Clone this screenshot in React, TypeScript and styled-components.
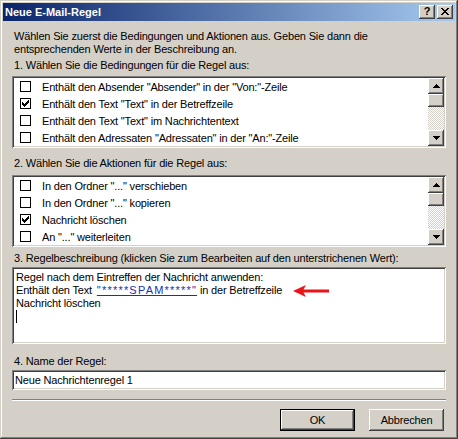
import React from 'react';
import styled, { createGlobalStyle } from 'styled-components';

const Global = createGlobalStyle`
  html, body { margin: 0; padding: 0; background: #d4d0c8; }
  body {
    font-family: "Liberation Sans", Arial, sans-serif;
    font-size: 11px;
    letter-spacing: -0.17px;
    color: #000;
  }
  * { box-sizing: border-box; }
`;

const raised = `
  background: #d4d0c8;
  box-shadow: inset -1px -1px #404040, inset 1px 1px #ffffff, inset -2px -2px #808080, inset 2px 2px #d4d0c8;
`;

const sunken = `
  box-shadow: inset 1px 1px #808080, inset -1px -1px #ffffff, inset 2px 2px #404040, inset -2px -2px #d4d0c8;
`;

const Window = styled.div`
  width: 458px;
  height: 439px;
  background: #d4d0c8;
  padding: 3px;
  display: flex;
  flex-direction: column;
  box-shadow: inset -1px -1px #404040, inset 1px 1px #d4d0c8, inset -2px -2px #808080, inset 2px 2px #ffffff;
`;

const TitleBar = styled.div`
  height: 18px;
  flex: none;
  background: linear-gradient(to right, #0a246a, #a6caf0);
  display: flex;
  align-items: center;
  padding: 0 2px 0 2px;
`;

const Title = styled.div`
  flex: 1;
  color: #ffffff;
  font-weight: bold;
  font-size: 11px;
  line-height: 13px;
  letter-spacing: 0;
`;

const CaptionButtons = styled.div`
  display: flex;
  gap: 2px;
`;

const CaptionButton = styled.div`
  width: 16px;
  height: 14px;
  ${raised}
  display: flex;
  align-items: center;
  justify-content: center;
  font-weight: bold;
  font-size: 11px;
  line-height: 1;
  padding-bottom: 1px;
`;

const Body = styled.div`
  flex: 1;
  display: flex;
  flex-direction: column;
  padding: 9px 9px 0 9px;
`;

const Intro = styled.div`
  line-height: 13px;
  padding-left: 2px;
`;

const Label = styled.div<{ $mt: number }>`
  margin-top: ${p => p.$mt}px;
  line-height: 13px;
  height: 13px;
  padding-left: 2px;
`;

const ListBox = styled.div<{ $mt: number }>`
  margin-top: ${p => p.$mt}px;
  height: 72px;
  background: #ffffff;
  padding: 2px;
  display: flex;
  overflow: hidden;
  ${sunken}
`;

const Items = styled.div`
  flex: 1;
  display: flex;
  flex-direction: column;
  overflow: hidden;
`;

const Row = styled.div`
  height: 17px;
  flex: none;
  display: flex;
  align-items: center;
  padding-left: 6px;
  gap: 11px;
  white-space: nowrap;
`;

const Box = styled.div`
  width: 11px;
  height: 11px;
  border: 1px solid #000;
  background: #fff;
  display: flex;
  align-items: center;
  justify-content: center;
  flex: none;
`;

const ScrollBar = styled.div`
  width: 16px;
  display: flex;
  flex-direction: column;
  background: repeating-conic-gradient(#ffffff 0 25%, #d4d0c8 0 50%) 0 0 / 2px 2px;
`;

const ScrollButton = styled.div`
  height: 16px;
  flex: none;
  ${raised}
  display: flex;
  align-items: center;
  justify-content: center;
`;

const Thumb = styled.div`
  height: 13px;
  flex: none;
  ${raised}
`;

const Track = styled.div`
  flex: 1;
`;

const Description = styled.div<{ $mt: number }>`
  margin-top: ${p => p.$mt}px;
  height: 77px;
  background: #ffffff;
  padding: 4px 4px 2px 4px;
  line-height: 13px;
  ${sunken}
`;

const DescLine = styled.div`
  height: 13px;
  display: flex;
  align-items: center;
  white-space: pre;
`;

const Link = styled.span`
  color: #1a30b0;
  text-decoration: underline;
  padding-left: 2px;
  letter-spacing: 1.2px;
`;

const Caret = styled.div`
  width: 1px;
  height: 13px;
  background: #000;
`;

const Arrow = styled.svg`
  margin-left: 11px;
  flex: none;
`;

const Input = styled.div<{ $mt: number }>`
  margin-top: ${p => p.$mt}px;
  height: 20px;
  background: #ffffff;
  padding: 0 3px;
  display: flex;
  align-items: center;
  ${sunken}
`;

const Separator = styled.div<{ $mt: number }>`
  margin-top: ${p => p.$mt}px;
  height: 2px;
  border-top: 1px solid #808080;
  border-bottom: 1px solid #ffffff;
`;

const ButtonRow = styled.div`
  margin-top: 8px;
  display: flex;
  justify-content: flex-end;
  gap: 14px;
  padding-right: 2px;
`;

const Button = styled.div<{ $default?: boolean }>`
  width: 75px;
  height: 22px;
  display: flex;
  align-items: center;
  justify-content: center;
  background: #d4d0c8;
  box-shadow: ${p =>
    p.$default
      ? 'inset -1px -1px #000000, inset 1px 1px #000000, inset -2px -2px #404040, inset 2px 2px #ffffff, inset -3px -3px #808080'
      : 'inset -1px -1px #404040, inset 1px 1px #ffffff, inset -2px -2px #808080, inset 2px 2px #d4d0c8'};
`;

const Check = () => (
  <svg width="7" height="7" viewBox="0 0 7 7" shapeRendering="crispEdges">
    {[2, 3, 4, 3, 2, 1, 0].map((y, x) => (
      <rect key={x} x={x} y={y} width="1" height="3" fill="#000" />
    ))}
  </svg>
);

const UpArrow = () => (
  <svg width="7" height="4" viewBox="0 0 7 4" shapeRendering="crispEdges">
    <rect x="3" y="0" width="1" height="1" fill="#000" />
    <rect x="2" y="1" width="3" height="1" fill="#000" />
    <rect x="1" y="2" width="5" height="1" fill="#000" />
    <rect x="0" y="3" width="7" height="1" fill="#000" />
  </svg>
);

const DownArrow = () => (
  <svg width="7" height="4" viewBox="0 0 7 4" shapeRendering="crispEdges">
    <rect x="0" y="0" width="7" height="1" fill="#000" />
    <rect x="1" y="1" width="5" height="1" fill="#000" />
    <rect x="2" y="2" width="3" height="1" fill="#000" />
    <rect x="3" y="3" width="1" height="1" fill="#000" />
  </svg>
);

const CloseGlyph = () => (
  <svg width="8" height="7" viewBox="0 0 8 7" shapeRendering="crispEdges">
    {[0, 1, 2, 3, 4, 5, 6].map(i => (
      <React.Fragment key={i}>
        <rect x={i} y={i} width="2" height="1" fill="#000" />
        <rect x={6 - i} y={i} width="2" height="1" fill="#000" />
      </React.Fragment>
    ))}
  </svg>
);

type Item = { text: string; checked: boolean };

const List: React.FC<{ items: Item[]; mt: number }> = ({ items, mt }) => (
  <ListBox $mt={mt}>
    <Items>
      {items.map((it, i) => (
        <Row key={i}>
          <Box>{it.checked && <Check />}</Box>
          <span>{it.text}</span>
        </Row>
      ))}
    </Items>
    <ScrollBar>
      <ScrollButton><UpArrow /></ScrollButton>
      <Thumb />
      <Track />
      <ScrollButton><DownArrow /></ScrollButton>
    </ScrollBar>
  </ListBox>
);

const conditions: Item[] = [
  { text: 'Enthält den Absender "Absender" in der "Von:"-Zeile', checked: false },
  { text: 'Enthält den Text "Text" in der Betreffzeile', checked: true },
  { text: 'Enthält den Text "Text" im Nachrichtentext', checked: false },
  { text: 'Enthält den Adressaten "Adressaten" in der "An:"-Zeile', checked: false },
];

const actions: Item[] = [
  { text: 'In den Ordner "..." verschieben', checked: false },
  { text: 'In den Ordner "..." kopieren', checked: false },
  { text: 'Nachricht löschen', checked: true },
  { text: 'An "..." weiterleiten', checked: false },
];

export default function App() {
  return (
    <>
      <Global />
      <Window>
        <TitleBar>
          <Title>Neue E-Mail-Regel</Title>
          <CaptionButtons>
            <CaptionButton>?</CaptionButton>
            <CaptionButton><CloseGlyph /></CaptionButton>
          </CaptionButtons>
        </TitleBar>
        <Body>
          <Intro>
            Wählen Sie zuerst die Bedingungen und Aktionen aus. Geben Sie dann die
            <br />
            entsprechenden Werte in der Beschreibung an.
          </Intro>
          <Label $mt={3}>1. Wählen Sie die Bedingungen für die Regel aus:</Label>
          <List items={conditions} mt={4} />
          <Label $mt={9}>2. Wählen Sie die Aktionen für die Regel aus:</Label>
          <List items={actions} mt={5} />
          <Label $mt={5}>3. Regelbeschreibung (klicken Sie zum Bearbeiten auf den unterstrichenen Wert):</Label>
          <Description $mt={2}>
            <DescLine>Regel nach dem Eintreffen der Nachricht anwenden:</DescLine>
            <DescLine>
              Enthält den Text <Link>"*****SPAM*****"</Link> in der Betreffzeile
              <Arrow width="36" height="12" viewBox="0 0 36 12">
                <path d="M0 6 L13 0 L10.5 4.5 L36 4.5 L36 7.5 L10.5 7.5 L13 12 Z" fill="#e8141a" />
              </Arrow>
            </DescLine>
            <DescLine>Nachricht löschen</DescLine>
            <DescLine><Caret /></DescLine>
          </Description>
          <Label $mt={11}>4. Name der Regel:</Label>
          <Input $mt={2}>Neue Nachrichtenregel 1</Input>
          <Separator $mt={9} />
          <ButtonRow>
            <Button $default>OK</Button>
            <Button>Abbrechen</Button>
          </ButtonRow>
        </Body>
      </Window>
    </>
  );
}
